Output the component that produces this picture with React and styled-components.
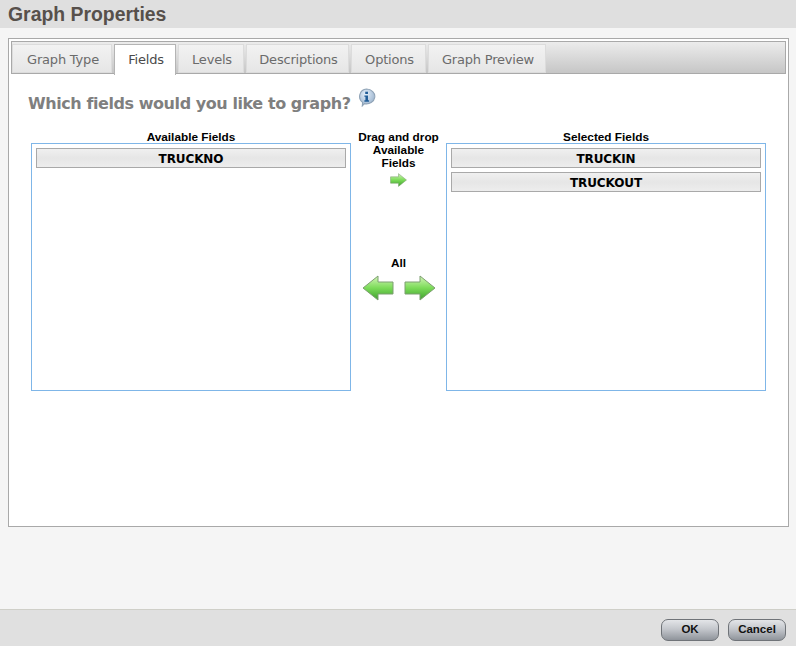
import React from "react";
import styled, { createGlobalStyle } from "styled-components";

const Global = createGlobalStyle`
  html, body { margin: 0; padding: 0; background: #f5f5f5; }
  #root { width: 796px; height: 646px; }
`;
const Page = styled.div`
  width: 796px; height: 646px; display: flex; flex-direction: column;
  background: #f5f5f5; overflow: hidden;
`;
const Header = styled.div`
  height: 28px; background: #dfdfdf; padding-left: 8px; box-sizing: border-box;
  font: bold 19.4px/28px "Liberation Sans", sans-serif; color: #57504b;
`;
const Panel = styled.div`
  margin: 10px 7px 0 8px; height: 489px; box-sizing: border-box;
  border: 1px solid #a9a9a9; background: #fff; padding: 2px;
`;
const TabBar = styled.div`
  height: 33px; box-sizing: border-box; border: 1px solid #a9a9a9;
  background: linear-gradient(#ececec, #c6c6c6);
  display: flex; gap: 2px; padding-top: 2px;
`;
const Tab = styled.div`
  width: ${p => p.$w}px; box-sizing: border-box; text-align: center; padding-left: 2px;
  font: 13px/29px "DejaVu Sans", sans-serif; letter-spacing: -0.2px;
  color: ${p => (p.$active ? "#4a4a4a" : "#6b6b6b")};
  background: ${p => (p.$active ? "#fff" : "linear-gradient(#f2f2f2, #e6e6e6)")};
  height: ${p => (p.$active ? "31px" : "29px")};
  border: 1px solid ${p => (p.$active ? "#b4b4b4" : "#dcdcdc")};
  border-bottom: ${p => (p.$active ? "none" : "1px solid #dcdcdc")};
`;
const Question = styled.div`
  display: flex; align-items: flex-start; margin: 17px 0 0 17px; height: 39px;
`;
const QuestionText = styled.div`
  font: bold 16px/26px "DejaVu Sans", sans-serif; letter-spacing: -0.43px; color: #7f7f7f;
`;
const InfoIcon = styled.svg`
  width: 19px; height: 19px; margin: -3px 0 0 6px; flex: none;
`;
const Columns = styled.div`
  display: flex; margin-left: 20px;
`;
const FieldColumn = styled.div`
  width: 320px; display: flex; flex-direction: column;
`;
const ColumnTitle = styled.div`
  height: 13px; text-align: center; color: #000;
  font: bold 11.8px/14px "Liberation Sans", sans-serif;
`;
const FieldBox = styled.div`
  height: 248px; box-sizing: border-box; border: 1px solid #7fb6e8; background: #fff;
  padding: 4px; display: flex; flex-direction: column; gap: 4px;
`;
const FieldItem = styled.div`
  height: 20px; box-sizing: border-box; border: 1px solid #a9a9a9; text-align: center;
  background: linear-gradient(#f0f0f0, #e6e6e6 50%, #ededed);
  font: bold 12px/20px "DejaVu Sans", sans-serif; letter-spacing: -0.1px; color: #000;
`;
const Middle = styled.div`
  width: 95px; display: flex; flex-direction: column; align-items: center; padding-top: 1px;
  font: bold 11.8px/13px "Liberation Sans", sans-serif; color: #000; text-align: center;
`;
const MiddleText = styled.div`
  margin-top: ${p => p.$top || 0}px;
`;
const SmallArrow = styled.svg`
  width: 17px; height: 14px; margin-top: 3px;
`;
const BigArrows = styled.div`
  display: flex; gap: 10px; margin-top: 5px;
`;
const BigArrow = styled.svg`
  width: 32px; height: 26px;
`;
const Footer = styled.div`
  margin-top: auto; height: 37px; box-sizing: border-box; border-top: 1px solid #cfcfc8;
  background: #e0e0e0; display: flex; justify-content: flex-end; gap: 9px;
  padding: 9px 10px 0 0;
`;
const Button = styled.div`
  width: 58px; height: 22px; box-sizing: border-box; border: 1px solid #6f7378;
  border-radius: 7px; text-align: center; color: #111;
  background: linear-gradient(#e3e5e8, #c4c7cc 45%, #8f949b);
  font: bold 11.5px/19px "Liberation Sans", sans-serif;
`;

const Arrow = ({ dir = "right", as: C, id }) => (
  <C viewBox="0 0 32 26">
    <defs>
      <linearGradient id={id} x1="0" y1="0" x2="0" y2="1">
        <stop offset="0" stopColor="#d4f5b8" />
        <stop offset="0.5" stopColor="#7bdb58" />
        <stop offset="1" stopColor="#3f9f2e" />
      </linearGradient>
    </defs>
    <path
      d="M1 7H16V1L31 13L16 25V19H1Z"
      transform={dir === "left" ? "matrix(-1 0 0 1 32 0)" : undefined}
      fill={`url(#${id})`}
      stroke="#7d9f70"
      strokeWidth="1"
      strokeLinejoin="round"
    />
  </C>
);

const tabs = [
  ["Graph Type", 100], ["Fields", 62], ["Levels", 66], ["Descriptions", 103],
  ["Options", 75], ["Graph Preview", 118],
];

export default function App() {
  return (
    <Page>
      <Global />
      <Header>Graph Properties</Header>
      <Panel>
        <TabBar>
          {tabs.map(([t, w]) => (
            <Tab key={t} $w={w} $active={t === "Fields"}>{t}</Tab>
          ))}
        </TabBar>
        <Question>
          <QuestionText>Which fields would you like to graph?</QuestionText>
          <InfoIcon viewBox="0 0 18 18">
            <defs>
              <radialGradient id="info" cx="0.4" cy="0.3" r="0.8">
                <stop offset="0" stopColor="#e4f0fb" />
                <stop offset="1" stopColor="#8fa9c6" />
              </radialGradient>
            </defs>
            <path d="M9 1a8 7 0 1 1-2 13.8L5 17l.3-3.4A7 7 0 0 1 9 1Z" fill="url(#info)" stroke="#8fa3b6" />
            <rect x="7.8" y="3.5" width="2.6" height="2.2" fill="#1f5c97" />
            <path d="M7 7h3.4v4.6h1V13H7v-1.4h1V8.4H7Z" fill="#1f5c97" />
          </InfoIcon>
        </Question>
        <Columns>
          <FieldColumn>
            <ColumnTitle>Available Fields</ColumnTitle>
            <FieldBox><FieldItem>TRUCKNO</FieldItem></FieldBox>
          </FieldColumn>
          <Middle>
            <MiddleText>Drag and drop<br />Available<br />Fields</MiddleText>
            <Arrow as={SmallArrow} id="a1" />
            <MiddleText $top={70}>All</MiddleText>
            <BigArrows>
              <Arrow as={BigArrow} dir="left" id="a2" />
              <Arrow as={BigArrow} id="a3" />
            </BigArrows>
          </Middle>
          <FieldColumn>
            <ColumnTitle>Selected Fields</ColumnTitle>
            <FieldBox>
              <FieldItem>TRUCKIN</FieldItem>
              <FieldItem>TRUCKOUT</FieldItem>
            </FieldBox>
          </FieldColumn>
        </Columns>
      </Panel>
      <Footer>
        <Button>OK</Button>
        <Button>Cancel</Button>
      </Footer>
    </Page>
  );
}
